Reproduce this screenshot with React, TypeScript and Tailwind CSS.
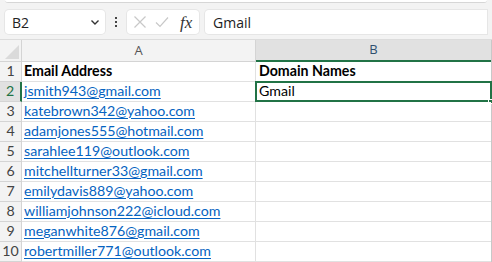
const emails = [
  "jsmith943@gmail.com",
  "katebrown342@yahoo.com",
  "adamjones555@hotmail.com",
  "sarahlee119@outlook.com",
  "mitchellturner33@gmail.com",
  "emilydavis889@yahoo.com",
  "williamjohnson222@icloud.com",
  "meganwhite876@gmail.com",
  "robertmiller771@outlook.com",
];

function FormulaBar() {
  return (
    <div className="flex h-[24px] px-[5px] mt-[7px] font-['Open_Sans',sans-serif] text-[14px] text-[#222]">
      <div className="w-[100px] bg-white rounded-[4px] shadow-[0_0_0_1px_#e6e6e6] flex items-center justify-between pl-[7px] pr-[4px]">
        <span>B2</span>
        <svg width="12" height="12" viewBox="0 0 12 12" fill="none" stroke="#333" strokeWidth="1.4">
          <path d="M2.5 4.5 6 8l3.5-3.5" />
        </svg>
      </div>
      <div className="w-[22px] flex flex-col items-center justify-center gap-[2px]">
        <span className="w-[2px] h-[2px] bg-[#444]" />
        <span className="w-[2px] h-[2px] bg-[#444]" />
        <span className="w-[2px] h-[2px] bg-[#444]" />
      </div>
      <div className="w-[72px] bg-white rounded-[4px] shadow-[0_0_0_1px_#e6e6e6] flex items-center pl-[6px] pr-[4px] gap-[8px]">
        <svg width="14" height="14" viewBox="0 0 14 14" fill="none" stroke="#c8c8c8" strokeWidth="1.2">
          <path d="M1.5 1.5 12.5 12.5M12.5 1.5 1.5 12.5" />
        </svg>
        <svg width="14" height="14" viewBox="0 0 14 14" fill="none" stroke="#c8c8c8" strokeWidth="1.2">
          <path d="M1 7.5 5 11.5 13 2.5" />
        </svg>
        <span className="font-['Liberation_Serif',serif] italic text-[17px] leading-none text-[#333] ml-[3px]">fx</span>
      </div>
      <div className="flex-1 ml-[6px] bg-white rounded-l-[4px] shadow-[0_0_0_1px_#e6e6e6] flex items-center pl-[8px]">
        Gmail
      </div>
    </div>
  );
}

export default function App() {
  return (
    <div className="w-[492px] h-[262px] overflow-hidden bg-[#f3f3f3]">
      <div className="h-[3px] mx-[5px] bg-white rounded-b-[4px] border-b border-[#d6d6d6]" />
      <FormulaBar />

      <div className="mt-[5px] font-['Lato',sans-serif] text-[14.2px]">
        {/* column headers */}
        <div className="flex h-[23px] border-t border-[#dcdcdc]">
          <div className="w-[22px] border-r border-b border-[#d4d4d4] bg-[#f3f3f3] relative overflow-hidden">
            <div className="absolute right-[2px] bottom-[2px] w-0 h-0 border-l-[14px] border-l-transparent border-b-[14px] border-b-[#dadada]" />
          </div>
          <div className="w-[234px] border-r border-b border-[#d4d4d4] bg-[#f3f3f3] flex items-center justify-center text-[#555] font-['Open_Sans',sans-serif] text-[13px]">
            A
          </div>
          <div className="w-[235px] border-b-2 border-[#217346] bg-[#e1e1e1] flex items-center justify-center text-[#2f4f6f] font-['Open_Sans',sans-serif] text-[13px]">
            B
          </div>
          <div className="w-[1px] bg-[#c8c8c8]" />
        </div>

        {/* row 1 */}
        <div className="flex h-[20px]">
          <div className="w-[22px] border-r border-b border-[#d4d4d4] flex items-end justify-center text-[#444]">1</div>
          <div className="w-[234px] bg-white border-r border-b border-[#e1e1e1] flex items-end pl-[2px] font-bold text-black">
            Email Address
          </div>
          <div className="w-[235px] bg-white border-b border-[#e1e1e1] flex items-end pl-[3px] font-bold text-black">
            Domain Names
          </div>
          <div className="w-[1px] bg-[#c8c8c8]" />
        </div>

        {emails.map((email, i) => {
          const n = i + 2;
          const active = n === 2;
          return (
            <div key={email} className="flex h-[20px]">
              <div
                className={
                  active
                    ? "w-[22px] border-r-2 border-r-[#217346] border-b border-b-[#d4d4d4] bg-[#e1e1e1] flex items-end justify-center text-[#217346]"
                    : "w-[22px] border-r border-b border-[#d4d4d4] flex items-end justify-center text-[#444]"
                }
              >
                {n}
              </div>
              <div className="w-[234px] bg-white border-r border-b border-[#e1e1e1] flex items-end pl-[2px]">
                <span className="text-[#0563c1] underline underline-offset-[2px] decoration-[1px]">{email}</span>
              </div>
              <div className="w-[235px] bg-white border-b border-[#e1e1e1] flex items-end pl-[3px] relative text-black">
                {active && (
                  <>
                    <span>Gmail</span>
                    <div className="absolute left-[-1px] top-[-1px] right-[-1px] bottom-[-1px] border-2 border-[#217346]" />
                    <div className="absolute right-[-2px] bottom-[-3px] w-[5px] h-[5px] bg-[#217346] border border-white" />
                  </>
                )}
              </div>
              <div className="w-[1px] bg-[#c8c8c8]" />
            </div>
          );
        })}
      </div>
    </div>
  );
}
